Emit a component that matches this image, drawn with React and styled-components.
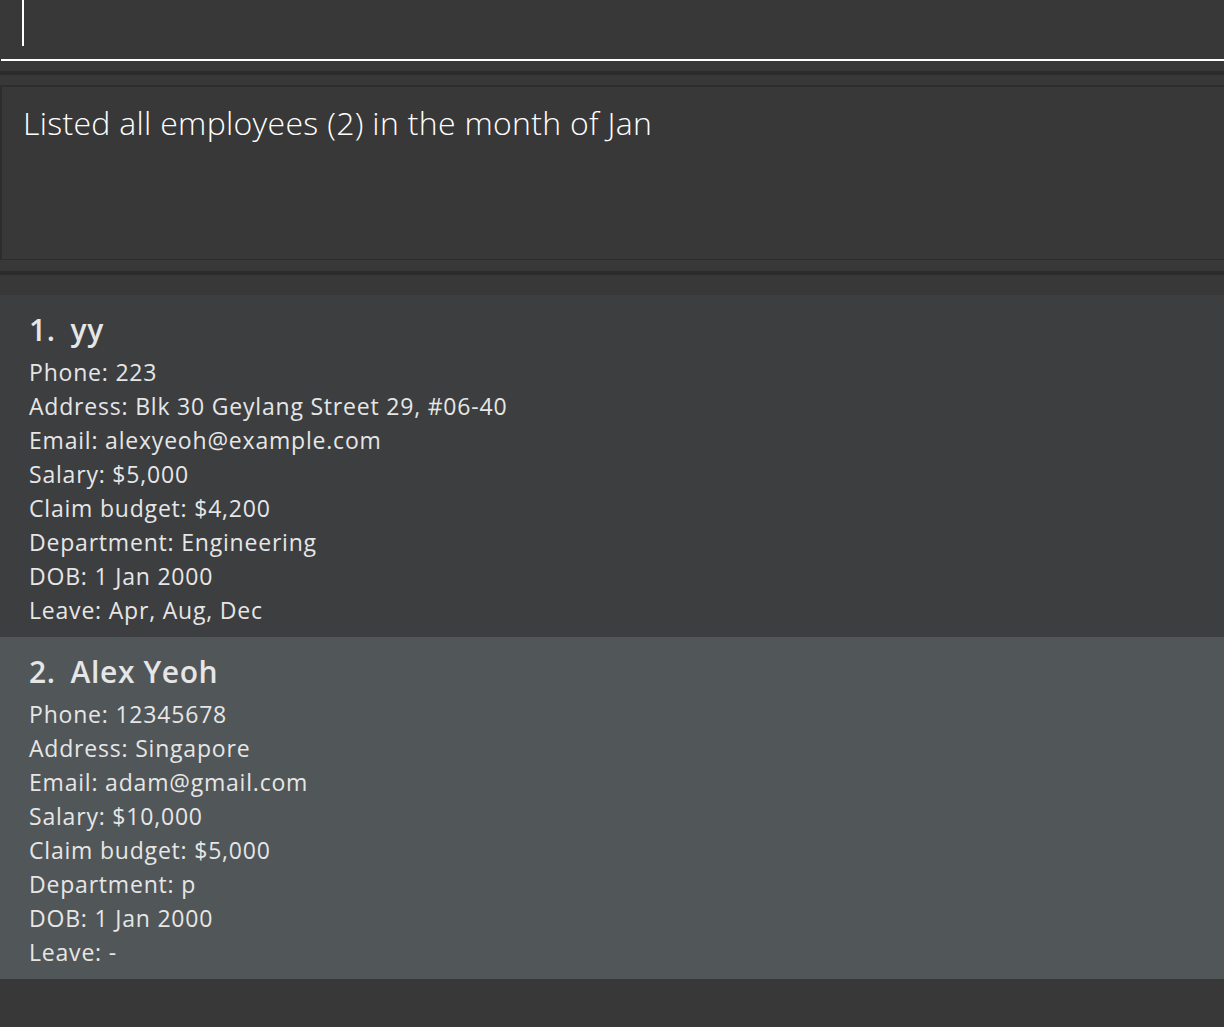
import React from 'react';
import styled, { createGlobalStyle } from 'styled-components';

const GlobalStyle = createGlobalStyle`
  html, body {
    margin: 0;
    padding: 0;
    background: #383838;
  }
  body {
    font-family: 'Open Sans', 'Noto Sans', sans-serif;
  }
`;

const Page = styled.div`
  width: 1224px;
  height: 1027px;
  background: #383838;
  display: flex;
  flex-direction: column;
  overflow: hidden;
`;

const CommandBox = styled.div`
  height: 59px;
  border-bottom: 2px solid #ffffff;
  margin-left: 1px;
  padding-left: 21px;
  display: flex;
  align-items: flex-start;
`;

const Caret = styled.div`
  width: 2px;
  height: 46px;
  background: #ffffff;
`;

const Divider = styled.div`
  height: 4px;
  background: #2b2b2b;
  margin: ${(p) => p.$margin};
`;

const ResultBox = styled.div`
  height: 175px;
  border: 2px solid #2d2d2d;
  border-right: none;
  border-bottom-width: 1px;
  padding: 15px 21px;
  box-sizing: border-box;
  color: #ffffff;
  font-family: 'Open Sans', sans-serif;
  font-weight: 300;
  font-size: 32px;
  letter-spacing: 0.3px;
  line-height: 42px;
`;

const List = styled.div`
  display: flex;
  flex-direction: column;
`;

const Card = styled.div`
  background: ${(p) => (p.$odd ? '#515658' : '#3c3e40')};
  height: 342px;
  box-sizing: border-box;
  padding: 15px 29px 0;
  color: #e6e6e6;
`;

const Name = styled.div`
  font-size: 30px;
  font-weight: 600;
  letter-spacing: 0.6px;
  line-height: 40px;
  margin-bottom: 5px;
  display: flex;
  gap: 15px;
`;

const Field = styled.div`
  font-size: 23px;
  letter-spacing: 0.8px;
  line-height: 34px;
`;

const employees = [
  {
    name: 'yy',
    phone: '223',
    address: 'Blk 30 Geylang Street 29, #06-40',
    email: 'alexyeoh@example.com',
    salary: '$5,000',
    claim: '$4,200',
    department: 'Engineering',
    dob: '1 Jan 2000',
    leave: 'Apr, Aug, Dec',
  },
  {
    name: 'Alex Yeoh',
    phone: '12345678',
    address: 'Singapore',
    email: 'adam@gmail.com',
    salary: '$10,000',
    claim: '$5,000',
    department: 'p',
    dob: '1 Jan 2000',
    leave: '-',
  },
];

function EmployeeCard({ index, e }) {
  return (
    <Card $odd={index % 2 === 1}>
      <Name>
        <span>{index + 1}.</span>
        <span>{e.name}</span>
      </Name>
      <Field>Phone: {e.phone}</Field>
      <Field>Address: {e.address}</Field>
      <Field>Email: {e.email}</Field>
      <Field>Salary: {e.salary}</Field>
      <Field>Claim budget: {e.claim}</Field>
      <Field>Department: {e.department}</Field>
      <Field>DOB: {e.dob}</Field>
      <Field>Leave: {e.leave}</Field>
    </Card>
  );
}

export default function App() {
  return (
    <Page>
      <GlobalStyle />
      <CommandBox>
        <Caret />
      </CommandBox>
      <Divider $margin="10px 0 10px" />
      <ResultBox>Listed all employees (2) in the month of Jan</ResultBox>
      <Divider $margin="11px 0 20px" />
      <List>
        {employees.map((e, i) => (
          <EmployeeCard key={i} index={i} e={e} />
        ))}
      </List>
    </Page>
  );
}
